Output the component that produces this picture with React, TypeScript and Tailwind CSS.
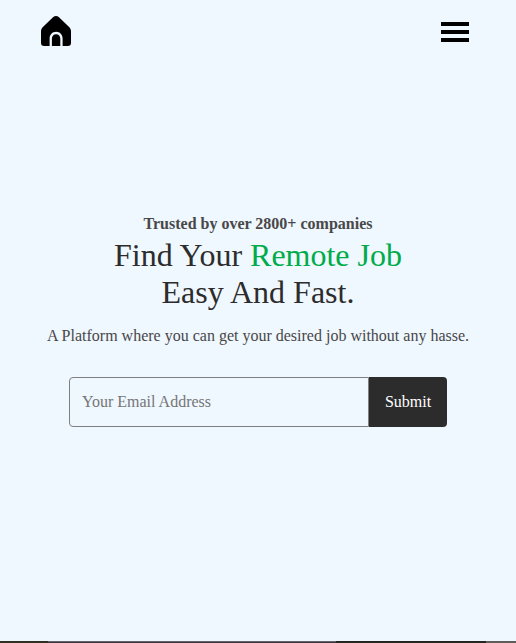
export default function App() {
  return (
    <div className="flex h-[643px] w-[516px] flex-col overflow-hidden bg-[#eff7ff] font-['Liberation_Serif','Times_New_Roman',serif] text-[#2c2c2c]">
      <header className="flex h-[62px] shrink-0 items-center justify-between pr-[47px] pl-[41px]">
        <svg width="30" height="30" viewBox="0 0 30 30" role="img" aria-label="Home">
          <path
            d="M12 1.3Q15-1.3 18 1.3L28.6 11.4Q30 13 30 15V26.8Q30 30 26.8 30H21.6V22.6C21.6 18.6 18.9 15.8 15.1 15.8S8.6 18.6 8.6 22.6V30H3.2Q0 30 0 26.8V15Q0 13 1.4 11.4Z"
            fill="#000"
          />
          <path d="M10.9 30V22.8C10.9 20 12.5 18.2 15.1 18.2S19.3 20 19.3 22.8V30Z" fill="#000" />
        </svg>
        <button type="button" aria-label="Menu" className="mt-0.5 flex w-7 flex-col gap-1">
          <span className="h-1 bg-black" />
          <span className="h-1 bg-black" />
          <span className="h-1 bg-black" />
        </button>
      </header>
      <main className="flex flex-1 flex-col items-center pt-[153px] text-center">
        <p className="text-base leading-[18px] font-bold text-[#484848]">Trusted by over 2800+ companies</p>
        <h1 className="mt-1 text-[32px] leading-[37px]">
          Find Your <span className="text-[#00ab4a]">Remote Job</span>
          <br />
          Easy And Fast.
        </h1>
        <p className="mt-4 text-base leading-[18px] whitespace-nowrap text-[#484848]">
          A Platform where you can get your desired job without any hasse.
        </p>
        <form className="mt-8 flex h-[50px] w-[378px]">
          <input
            type="email"
            placeholder="Your Email Address"
            className="w-[300px] rounded-l border border-[#808080] px-3 text-base outline-none placeholder:text-[#757575]"
          />
          <button type="button" className="flex-1 rounded-r bg-[#2c2c2c] text-base font-medium text-white">
            Submit
          </button>
        </form>
      </main>
      <footer className="flex h-0.5 shrink-0">
        <div className="w-12 bg-[#302f20]" />
        <div className="w-72 border-t border-[#66666a] bg-[#38343a]" />
        <div className="w-[150px] bg-[#262720]" />
        <div className="flex-1 bg-[#605d58]" />
      </footer>
    </div>
  );
}
